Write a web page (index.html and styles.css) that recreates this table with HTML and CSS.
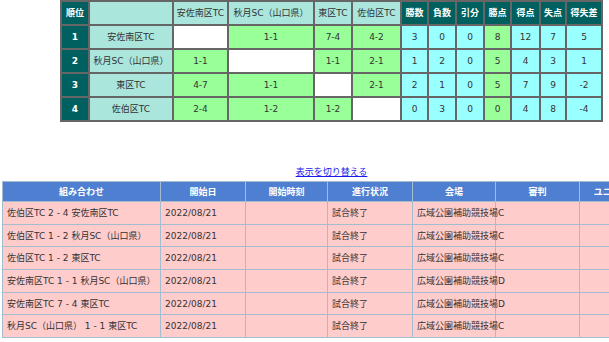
FILE: index.html
```html
<!DOCTYPE html>
<html lang="ja">
<head>
<meta charset="utf-8">
<title>順位表</title>
<link rel="stylesheet" href="styles.css">
</head>
<body>
<div class="page">
  <table class="standings">
    <colgroup>
      <col class="c-rank"><col class="c-name"><col class="c-t1"><col class="c-t2"><col class="c-t3"><col class="c-t4">
      <col class="c-w"><col class="c-l"><col class="c-d"><col class="c-p"><col class="c-gf"><col class="c-ga"><col class="c-gd">
    </colgroup>
    <tr>
      <th class="dark">順位</th>
      <th class="light"></th>
      <th class="light">安佐南区TC</th>
      <th class="light">秋月SC（山口県）</th>
      <th class="light">東区TC</th>
      <th class="light">佐伯区TC</th>
      <th class="dark">勝数</th>
      <th class="dark">負数</th>
      <th class="dark">引分</th>
      <th class="dark">勝点</th>
      <th class="dark">得点</th>
      <th class="dark">失点</th>
      <th class="dark">得失差</th>
    </tr>
    <tr>
      <td class="dark">1</td>
      <td class="light">安佐南区TC</td>
      <td class="blank"></td>
      <td class="green">1-1</td>
      <td class="green">7-4</td>
      <td class="green">4-2</td>
      <td class="cyan">3</td>
      <td class="cyan">0</td>
      <td class="cyan">0</td>
      <td class="green">8</td>
      <td class="cyan">12</td>
      <td class="cyan">7</td>
      <td class="cyan">5</td>
    </tr>
    <tr>
      <td class="dark">2</td>
      <td class="light">秋月SC（山口県）</td>
      <td class="green">1-1</td>
      <td class="blank"></td>
      <td class="green">1-1</td>
      <td class="green">2-1</td>
      <td class="cyan">1</td>
      <td class="cyan">2</td>
      <td class="cyan">0</td>
      <td class="green">5</td>
      <td class="cyan">4</td>
      <td class="cyan">3</td>
      <td class="cyan">1</td>
    </tr>
    <tr>
      <td class="dark">3</td>
      <td class="light">東区TC</td>
      <td class="green">4-7</td>
      <td class="green">1-1</td>
      <td class="blank"></td>
      <td class="green">2-1</td>
      <td class="cyan">2</td>
      <td class="cyan">1</td>
      <td class="cyan">0</td>
      <td class="green">5</td>
      <td class="cyan">7</td>
      <td class="cyan">9</td>
      <td class="cyan">-2</td>
    </tr>
    <tr>
      <td class="dark">4</td>
      <td class="light">佐伯区TC</td>
      <td class="green">2-4</td>
      <td class="green">1-2</td>
      <td class="green">1-2</td>
      <td class="blank"></td>
      <td class="cyan">0</td>
      <td class="cyan">3</td>
      <td class="cyan">0</td>
      <td class="green">0</td>
      <td class="cyan">4</td>
      <td class="cyan">8</td>
      <td class="cyan">-4</td>
    </tr>
  </table>

  <div class="switch"><a href="#">表示を切り替える</a></div>

  <table class="matches">
    <colgroup>
      <col class="m1"><col class="m2"><col class="m3"><col class="m4"><col class="m5"><col class="m6"><col class="m7">
    </colgroup>
    <tr>
      <th>組み合わせ</th>
      <th>開始日</th>
      <th>開始時刻</th>
      <th>進行状況</th>
      <th>会場</th>
      <th>審判</th>
      <th>ユニフォーム</th>
    </tr>
    <tr>
      <td>佐伯区TC 2 - 4 安佐南区TC</td>
      <td>2022/08/21</td>
      <td></td>
      <td>試合終了</td>
      <td>広域公園補助競技場C</td>
      <td></td>
      <td></td>
    </tr>
    <tr>
      <td>佐伯区TC 1 - 2 秋月SC（山口県）</td>
      <td>2022/08/21</td>
      <td></td>
      <td>試合終了</td>
      <td>広域公園補助競技場C</td>
      <td></td>
      <td></td>
    </tr>
    <tr>
      <td>佐伯区TC 1 - 2 東区TC</td>
      <td>2022/08/21</td>
      <td></td>
      <td>試合終了</td>
      <td>広域公園補助競技場C</td>
      <td></td>
      <td></td>
    </tr>
    <tr>
      <td>安佐南区TC 1 - 1 秋月SC（山口県）</td>
      <td>2022/08/21</td>
      <td></td>
      <td>試合終了</td>
      <td>広域公園補助競技場D</td>
      <td></td>
      <td></td>
    </tr>
    <tr>
      <td>安佐南区TC 7 - 4 東区TC</td>
      <td>2022/08/21</td>
      <td></td>
      <td>試合終了</td>
      <td>広域公園補助競技場D</td>
      <td></td>
      <td></td>
    </tr>
    <tr>
      <td>秋月SC（山口県） 1 - 1 東区TC</td>
      <td>2022/08/21</td>
      <td></td>
      <td>試合終了</td>
      <td>広域公園補助競技場C</td>
      <td></td>
      <td></td>
    </tr>
  </table>
</div>
</body>
</html>
```

FILE: styles.css
```css
html {
  overflow: hidden;
}

body {
  margin: 0;
  background: #ffffff;
  font-family: "DejaVu Sans", "Noto Sans CJK JP", sans-serif;
  font-size: 9px;
  color: #333333;
}

.page {
  width: 663px;
}

/* ---------- standings ---------- */
.standings {
  margin: 0 auto;
  width: 543px;
  table-layout: fixed;
  border-collapse: separate;
  border-spacing: 2px;
  background: #666666;
}

.c-rank { width: 26px; }
.c-name { width: 82px; }
.c-t1 { width: 53px; }
.c-t2 { width: 84px; }
.c-t3 { width: 36px; }
.c-t4 { width: 47px; }
.c-w { width: 25px; }
.c-l { width: 26px; }
.c-d { width: 26px; }
.c-p { width: 25px; }
.c-gf { width: 27px; }
.c-ga { width: 24px; }
.c-gd { width: 34px; }

.standings th,
.standings td {
  height: 22px;
  padding: 0;
  text-align: center;
  vertical-align: middle;
  white-space: nowrap;
  font-weight: normal;
  line-height: 12px;
}

.standings .dark {
  background: #006060;
  color: #ffffff;
  font-weight: bold;
}

.standings .light {
  background: #aae6dc;
}

.standings .green {
  background: #99ff99;
}

.standings .cyan {
  background: #99ffff;
}

.standings .blank {
  background: #ffffff;
}

/* ---------- switch link ---------- */
.switch {
  margin-top: 44px;
  text-align: center;
  line-height: 12px;
}

.switch a {
  color: #1a1aee;
  text-decoration: underline;
}

/* ---------- matches ---------- */
.matches {
  margin: 3px 0 0 2px;
  width: 659px;
  table-layout: fixed;
  border-collapse: collapse;
  border: 1px solid #a3bccf;
}

.m1 { width: 158px; }
.m2 { width: 85px; }
.m3 { width: 82px; }
.m4 { width: 85px; }
.m5 { width: 83px; }
.m6 { width: 84px; }
.m7 { width: 82px; }

.matches th,
.matches td {
  border: 1px solid #a3bccf;
  white-space: nowrap;
  line-height: 12px;
  vertical-align: middle;
}

.matches th {
  height: 19px;
  padding: 0;
  background: #4f7fd0;
  color: #ffffff;
  font-weight: bold;
  text-align: center;
}

.matches td {
  height: 21.7px;
  padding: 0 0 0 4px;
  background: #ffcccc;
  text-align: left;
}
```
